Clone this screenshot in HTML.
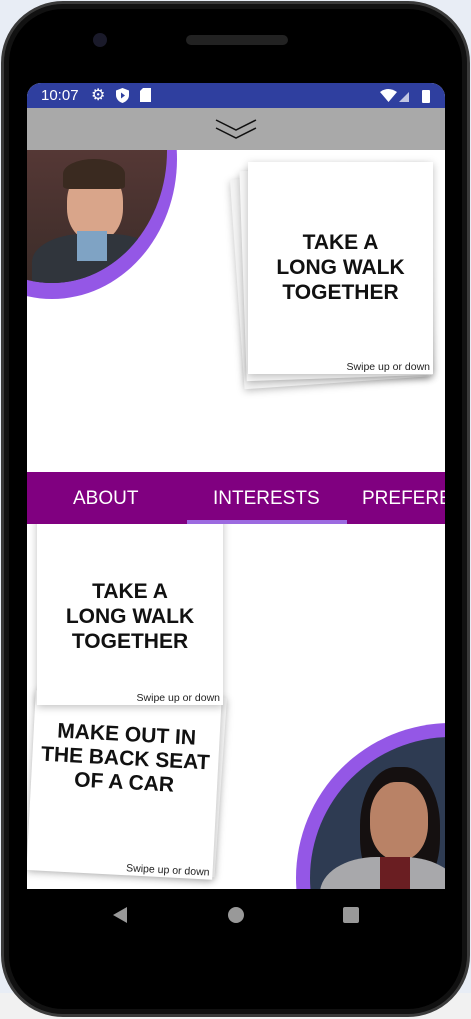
<!DOCTYPE html>
<html><head><style>
*{margin:0;padding:0;box-sizing:border-box}
body{width:471px;height:1019px;overflow:hidden;background:#e8edf5;position:relative;font-family:"Liberation Sans",sans-serif}
.bot{position:absolute;left:0;top:993px;width:471px;height:26px;background:#f1f1f1}
.phone{position:absolute;left:1px;top:1px;width:469px;height:1016px;background:#000;border-radius:62px;border:3px solid #3a3a3a;box-shadow:inset 0 0 0 5px #111}
.screen{position:absolute;left:27px;top:83px;width:418px;height:806px;background:#fff;overflow:hidden;border-radius:14px 14px 0 0}
.status{position:absolute;left:0;top:0;width:418px;height:25px;background:#2f3f9f;color:#fff;font-size:15px}
.gray{position:absolute;left:0;top:25px;width:418px;height:42px;background:#a9a9a9}
.sec{position:absolute;left:0;width:418px;overflow:hidden}
.card{position:absolute;background:#fff;box-shadow:0 2px 8px rgba(0,0,0,.25);text-align:center;font-weight:bold;font-size:20px;line-height:25px;color:#111}
.sw{position:absolute;right:3px;bottom:1px;font-size:10.5px;font-weight:normal;color:#222;line-height:12px}
.tabs{position:absolute;left:0;top:389px;width:418px;height:52px;background:#800080;color:#fff;font-size:19px}
.tabs span{position:absolute;top:16px}
</style></head><body>
<div class="bot"></div>
<div class="phone"></div>
<div style="position:absolute;left:93px;top:33px;width:14px;height:14px;border-radius:50%;background:#1a1a2a"></div>
<div style="position:absolute;left:186px;top:35px;width:102px;height:10px;border-radius:5px;background:#222"></div>
<div class="screen">
 <div class="status">
  <span style="position:absolute;left:14px;top:4px">10:07</span>
  <span style="position:absolute;left:64px;top:2px;font-size:16px">⚙</span>
  <svg style="position:absolute;left:89px;top:5px" width="13" height="15" viewBox="0 0 13 15"><path d="M6.5 0L0 2.5V7c0 4 3 7 6.5 8C10 14 13 11 13 7V2.5z" fill="#fff"/><path d="M5 4.5v6l4-3z" fill="#2f3f9f"/></svg>
  <svg style="position:absolute;left:113px;top:5px" width="11" height="14"><path d="M3 0H11V14H0V3z" fill="#fff"/></svg>
  <svg style="position:absolute;left:353px;top:6px" width="60" height="14"><path d="M0 3Q8-3 17 3L8.5 13z" fill="#fff"/><path d="M19 13L29 3V13z" fill="#fff" opacity=".7"/><rect x="42" y="1" width="8" height="13" rx="1" fill="#fff"/></svg>
 </div>
 <div class="gray"><svg style="position:absolute;left:187px;top:9px" width="44" height="22"><path d="M2 3L22 13L42 3M2 11L22 21L42 11" fill="none" stroke="#111" stroke-width="1.5"/></svg></div>
 <div class="sec" style="top:67px;height:322px">
  <div style="position:absolute;left:-100px;top:-131px;width:250px;height:280px;border-radius:50%;background:#9457e6"></div>
  <div style="position:absolute;left:-90px;top:-131px;width:230px;height:264px;border-radius:50%;background:linear-gradient(#4a4f58 0%,#5a3a38 40%,#3b2c28 100%);overflow:hidden">
   <div style="position:absolute;left:130px;top:150px;width:56px;height:72px;border-radius:45%;background:#d9a58a"></div>
   <div style="position:absolute;left:126px;top:140px;width:62px;height:30px;border-radius:50% 50% 10% 10%;background:#3a2a20"></div>
   <div style="position:absolute;left:95px;top:215px;width:130px;height:70px;border-radius:40% 40% 0 0;background:#30353c"></div>
   <div style="position:absolute;left:140px;top:212px;width:30px;height:30px;background:#7fa3c4"></div>
  </div>
  <div class="card" style="left:210px;top:23px;width:186px;height:210px;transform:rotate(-4deg);background:#f4f4f4"></div>
  <div class="card" style="left:216px;top:18px;width:186px;height:210px;transform:rotate(-2deg);background:#f8f8f8"><div class="sw">n</div></div>
  <div class="card" style="left:221px;top:12px;width:185px;height:212px;padding-top:68px;font-size:21px">TAKE A<br>LONG WALK<br>TOGETHER<div class="sw">Swipe up or down</div></div>
 </div>
 <div class="tabs"><span style="left:46px">ABOUT</span><span style="left:186px">INTERESTS</span><span style="left:335px">PREFERENCES</span>
  <div style="position:absolute;left:160px;top:48px;width:160px;height:4px;background:#9c6ae0"></div></div>
 <div class="sec" style="top:441px;height:365px">
  <div style="position:absolute;left:269px;top:199px;width:310px;height:310px;border-radius:50%;background:#9457e6"></div>
  <div style="position:absolute;left:283px;top:213px;width:282px;height:282px;border-radius:50%;background:#2e3b52;overflow:hidden">
   <div style="position:absolute;left:50px;top:30px;width:80px;height:130px;border-radius:45%;background:#151010"></div>
   <div style="position:absolute;left:60px;top:45px;width:58px;height:78px;border-radius:45%;background:#b98266"></div>
   <div style="position:absolute;left:10px;top:120px;width:140px;height:90px;border-radius:40% 40% 0 0;background:#a8a8ab"></div>
   <div style="position:absolute;left:70px;top:120px;width:30px;height:40px;background:#6a1e22"></div>
  </div>
  <div class="card" style="left:8px;top:167px;width:186px;height:180px;transform:rotate(4deg);background:#f6f6f6"></div>
  <div class="card" style="left:4px;top:171px;width:186px;height:180px;transform:rotate(3deg);padding-top:28px;font-size:21px;line-height:24px">MAKE OUT IN<br>THE BACK SEAT<br>OF A CAR<div class="sw">Swipe up or down</div></div>
  <div class="card" style="left:10px;top:-11px;width:186px;height:192px;padding-top:66px;font-size:21px">TAKE A<br>LONG WALK<br>TOGETHER<div class="sw">Swipe up or down</div></div>
 </div>
</div>
<svg style="position:absolute;left:110px;top:905px" width="250" height="22"><path d="M17 2V18L3 10z" fill="#999"/><circle cx="126" cy="10" r="8" fill="#999"/><rect x="233" y="2" width="16" height="16" rx="2" fill="#999"/></svg>
</body></html>
